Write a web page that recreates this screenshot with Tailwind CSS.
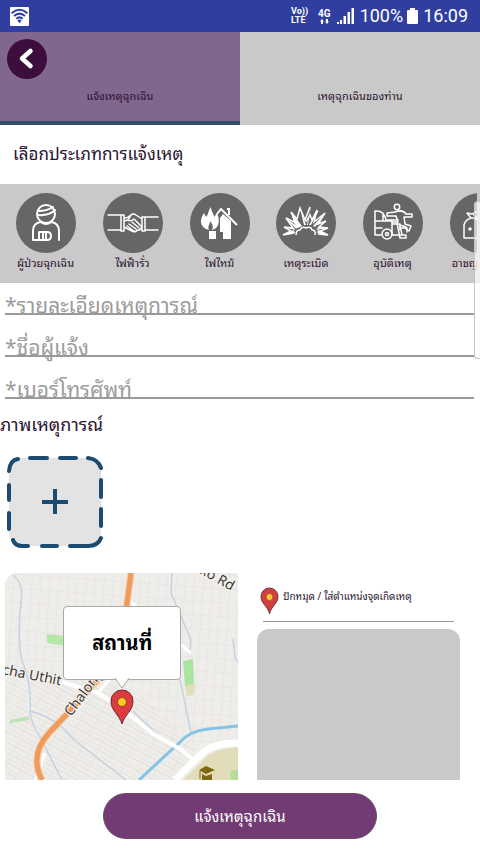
<!DOCTYPE html>
<html lang="th">
<head>
<meta charset="utf-8">
<meta name="viewport" content="width=device-width, initial-scale=1">
<title>แจ้งเหตุฉุกเฉิน</title>
<script src="https://cdn.jsdelivr.net/npm/@tailwindcss/browser@4"></script>
</head>
<body class="relative flex min-h-screen flex-col overflow-x-hidden bg-white font-['Noto_Sans_Thai_Looped','Noto_Looped_Thai','Droid_Sans_Thai','Loma','Garuda','Waree','Noto_Sans',sans-serif] text-[#2b1430]">

<header class="flex h-8 items-center justify-between bg-[#303f9f] pr-3 pl-[10px] font-[Roboto,sans-serif] text-white">
  <svg class="size-[19px]" viewBox="0 0 19 19" role="img" aria-label="Wi-Fi">
    <rect width="19" height="19" rx="1" fill="#fff"/>
    <g fill="none" stroke="#303f9f" stroke-width="2"><path d="M1.5 6.2Q9.500 -.6 17.500 6.200"/><path d="M4 9Q9.500 4.200 15 9"/><path d="M6.300 11.800Q9.500 9 12.700 11.800"/></g>
    <path d="M7.300 13.300Q9.500 11.800 11.700 13.300L9.500 16.200Z" fill="#303f9f"/>
  </svg>
  <div class="flex items-center">
    <div class="mr-[10px] text-[9px] leading-[9px] font-bold"><div>Vo))</div><div>LTE</div></div>
    <div class="mr-[6px] flex flex-col items-center text-[10px] leading-[10px] font-bold">4G
      <svg class="h-[5px] w-[9px]" viewBox="0 0 9 5" fill="#fff"><path d="M0 2.500 2 0 4 2.500H3V5H1V2.500ZM5 2.500H6V0H8V2.500H9L7 5Z"/></svg>
    </div>
    <svg class="mr-[6px] h-4 w-[17px]" viewBox="0 0 17 16" fill="#fff"><path d="M0 14h2v2H0zM3 12h2v4H3zM6.500 8h2.500v8H6.500zM10.500 4H13v12h-2.500zM14.500 0H17v16h-2.500z"/></svg>
    <span class="mr-1 text-[18px] leading-6">100%</span>
    <svg class="mr-[5px] h-4 w-[11px]" viewBox="0 0 11 16" fill="#fff"><path d="M3 0h5v2h2q1 0 1 1v12q0 1-1 1H1q-1 0-1-1V3q0-1 1-1h2z"/></svg>
    <span class="text-[18px] leading-6">16:09</span>
  </div>
</header>

<nav class="relative grid h-[93px] grid-cols-2 text-[11px] leading-4">
  <a href="#report" aria-current="page" class="flex items-end justify-center border-b-4 border-[#364c68] bg-[#80678d] pb-[18px]">แจ้งเหตุฉุกเฉิน</a>
  <a href="#mine" class="flex items-end justify-center bg-[#c9c9c9] pb-[22px]">เหตุฉุกเฉินของท่าน</a>
  <button type="button" aria-label="ย้อนกลับ" class="absolute top-[7px] left-[7px] flex size-10 items-center justify-center rounded-full bg-[#3d0d3d]">
    <svg class="size-6" viewBox="0 0 24 24" fill="none" stroke="#fff" stroke-width="4.500" stroke-linecap="round" stroke-linejoin="round"><path d="M15.500 4 7 11.500 15.500 19"/></svg>
  </button>
</nav>

<main class="flex flex-1 flex-col">
  <h1 class="flex h-[59px] items-center pb-1 pl-[13px] text-[17px] leading-6">เลือกประเภทการแจ้งเหตุ</h1>

  <section class="relative bg-[#c9c9c9]">
    <ul class="mr-[3px] flex h-[99px] overflow-hidden pt-[9px] pl-[2px] text-[11px] leading-[18px] whitespace-nowrap">
      <li class="w-[87px] shrink-0"><button type="button" class="flex w-full flex-col items-center">
        <svg class="size-[60px]" viewBox="0 0 60 60"><circle cx="30" cy="30" r="30" fill="#666"/><g fill="none" stroke="#fff" stroke-width="2" stroke-linecap="round" stroke-linejoin="round"><circle cx="30" cy="21" r="9"/><path d="M22 18Q31 18 37 14M22 22Q33 23 39 17M17 47V38Q17 30 25 29Q30 33 35 29Q43 30 43 38V47M17 47H31Q35 47 35 43Q35 39 31 39H23V47M27 39V47M30 39V47"/></g></svg>
        <span>ผู้ป่วยฉุกเฉิน</span></button></li>
      <li class="w-[87px] shrink-0"><button type="button" class="flex w-full flex-col items-center">
        <svg class="size-[60px]" viewBox="0 0 60 60"><circle cx="30" cy="30" r="30" fill="#666"/><g fill="none" stroke="#fff" stroke-width="1.500" stroke-linecap="round" stroke-linejoin="round"><path d="M5 22H18M5 37H18M55 24H42M55 37H42M18 22V38H21V22ZM42 24V38H39V24ZM21 25Q25 25 28 22Q30 20 33 22L39 26M28 22 25 27Q27 29 31 26L39 34M21 34 29 38Q33 40 34 37M26 31 33 36M29 29 36 35M24 33 31 38M34 37Q37 38 39 34M21 28 25 27"/></g></svg>
        <span>ไฟฟ้ารั่ว</span></button></li>
      <li class="w-[87px] shrink-0"><button type="button" class="flex w-full flex-col items-center">
        <svg class="size-[60px]" viewBox="0 0 60 60"><circle cx="30" cy="30" r="30" fill="#666"/><path fill="#fff" d="M19 37C10 35 9 27 14 20L16 24C19 21 18 17 21 14C21 19 24 20 24 24L27 20C31 29 28 36 22 37C24 33 22 31 20 28C20 32 17 33 19 37ZM19 38H26V46H19ZM30 25 33 21 41 28V46H33V39H30Z"/><path d="M27 21 31 16 47 32M37 16H39V22" fill="none" stroke="#fff" stroke-width="2"/></svg>
        <span>ไฟไหม้</span></button></li>
      <li class="w-[86px] shrink-0"><button type="button" class="flex w-full flex-col items-center">
        <svg class="size-[60px]" viewBox="0 0 60 60"><circle cx="30" cy="30" r="30" fill="#666"/><g fill="none" stroke="#fff" stroke-width="1.500" stroke-linejoin="miter"><path d="M18 40 7 42 15 38 8 34 17 35 10 25 20 30 15 19 21 26 24 15 29 27 34 14M36 27 41 17 38 29 49 20 42 31 50 28 43 34 52 35 44 38 52 42 42 41"/><path d="M30 29 34 22 36 27 42 18"/><path d="M20 42Q20 37 24 37Q26 33 30 35Q35 33 36 37Q40 37 39 42"/></g><path fill="#fff" d="M15 19 26 33 22 35 18 30ZM24 15 30 32H28ZM35 13 32 32H31ZM42 17 35 32H33ZM10 25 22 34 20 36ZM49 20 39 34 37 33ZM7 42 18 37 19 40ZM52 42 42 37 41 40ZM8 34 18 35 19 37ZM52 35 43 34 40 37Z"/></svg>
        <span>เหตุระเบิด</span></button></li>
      <li class="w-[87px] shrink-0"><button type="button" class="flex w-full flex-col items-center">
        <svg class="size-[60px]" viewBox="0 0 60 60"><circle cx="30" cy="30" r="30" fill="#666"/><g fill="none" stroke="#fff" stroke-width="1.500" stroke-linecap="round" stroke-linejoin="round"><path d="M18 42H12V18Q21 17 23 27H35M12 28H29V41M12 35H19M29 42H38M20 20V27M29 31H37V37"/><circle cx="24" cy="41" r="5"/><circle cx="24" cy="41" r="1.500"/><circle cx="34" cy="14" r="2.700"/><path d="M32 19 24 20V23L33 23 35 29 29 29M32 19Q40 16 43 21L49 21V24L41 24 42 31 48 33 46 38 43 36 43 34 37 32 39 42H43V45H37L34 30M39 35H44V39"/></g></svg>
        <span>อุบัติเหตุ</span></button></li>
      <li class="w-[87px] shrink-0"><button type="button" class="flex w-full flex-col items-center">
        <svg class="size-[60px]" viewBox="0 0 60 60"><circle cx="30" cy="30" r="30" fill="#666"/><g fill="none" stroke="#fff" stroke-width="1.500" stroke-linecap="round" stroke-linejoin="round"><path d="M14 45V32Q15 27 21 25L17 20 22 21 27 19M21 25Q27 24 32 32V45H14M24 22 28 26"/><circle cx="20" cy="36" r="1"/></g></svg>
        <span>อาชญากรรม</span></button></li>
    </ul>
    <div class="absolute top-[17px] right-0 h-[158px] w-[6px] rounded-l border border-r-0 border-[#c4c4c4] bg-white/70"></div>
  </section>

  <form class="flex flex-1 flex-col">
    <div class="flex flex-col pr-[6px] pl-[5px]">
      <input aria-label="รายละเอียดเหตุการณ์" type="text" placeholder="*รายละเอียดเหตุการณ์" class="h-[42px] bg-[linear-gradient(#9a9a9a,#9a9a9a)] bg-[length:100%_2px] bg-[position:0_30px] bg-no-repeat pb-[2px] text-[21px] leading-10 outline-none placeholder:text-[#9c9c9c]">
      <input aria-label="ชื่อผู้แจ้ง" type="text" placeholder="*ชื่อผู้แจ้ง" class="h-[42px] bg-[linear-gradient(#9a9a9a,#9a9a9a)] bg-[length:100%_2px] bg-[position:0_30px] bg-no-repeat pb-[2px] text-[21px] leading-10 outline-none placeholder:text-[#9c9c9c]">
      <input aria-label="เบอร์โทรศัพท์" type="tel" placeholder="*เบอร์โทรศัพท์" class="h-[42px] bg-[linear-gradient(#9a9a9a,#9a9a9a)] bg-[length:100%_2px] bg-[position:0_30px] bg-no-repeat pb-[2px] text-[21px] leading-10 outline-none placeholder:text-[#9c9c9c]">
    </div>

    <h2 class="text-[18px] leading-7">ภาพเหตุการณ์</h2>
    <button type="button" aria-label="เพิ่มภาพ" class="mt-[18px] ml-[6px] h-[94px] w-[98px]">
      <svg class="size-full" viewBox="6 455 98 94" fill="none" stroke="#1b4b70" stroke-width="4" stroke-linecap="round"><rect x="9" y="458" width="92" height="88" rx="14" fill="#e3e3e3" stroke="none"/><path d="M9 471Q10 460 18 459M30 458H47M60 458H76M88 458Q98 459 101 468M101 480V497M101 509V526M101 538Q98 546 88 546H70M57 546H42M28 546H22Q15 546 13 540M9 529V513M9 500V485"/><path d="M55 491V512M44 502H66" stroke-linecap="square"/></svg>
    </button>

    <div class="mt-[24px] flex gap-[19px] pr-5 pl-[5px]">
      <div class="relative h-[207px] flex-[233] overflow-hidden rounded-tl-xl">
        <svg class="size-full" viewBox="0 0 233 207" preserveAspectRatio="xMidYMid slice" role="img" aria-label="แผนที่">
          <defs>
            <pattern id="blocks" width="15" height="9" patternUnits="userSpaceOnUse" patternTransform="rotate(28)"><path d="M0 0H15M0 0V9M0 4.500H15" stroke="#e0ddd8" stroke-width=".8" fill="none"/></pattern>
            <pattern id="rows" width="9" height="14" patternUnits="userSpaceOnUse" patternTransform="rotate(4)"><path d="M0 0V14M0 0H9" stroke="#e0ddd8" stroke-width=".8" fill="none"/></pattern>
          </defs>
          <rect width="233" height="207" fill="#efedea"/>
          <path d="M0 0H233V170H185L130 115L60 105L0 90Z" fill="url(#rows)"/>
          <path d="M0 90 70 105 130 115 190 175V207H0Z" fill="url(#blocks)"/>
          <path d="M42 61 62 63V73L42 70Z" fill="#b5e8a4"/>
          <path d="M178 88 188 86 189 111 180 113Z" fill="#abe3a0"/><path d="M180 113 190 110 189 122 182 123Z" fill="#dfe0b5"/>
          <path d="M5 147 24 143V147L5 150Z" fill="#bfe3b8"/>
          <path d="M179 207 203 182Q213 176 233 174V207Z" fill="#e3dcb9"/><path d="M225 200Q228 196 233 197V207H226Z" fill="#b5dc99"/>
          <g fill="none" stroke="#c3d3df" stroke-width="1.500"><path d="M8 2Q19 10 16 28Q12 65 17 88Q27 110 25 140Q27 152 35 164L57 207M25 138Q52 145 68 166L121 207M167 0 166 20 186 67 185 80M175 106 186 160M228 66 230 84 233 90M128 138 157 166"/></g>
          <path d="M233 153 203 156Q184 158 174 170L134 207" fill="none" stroke="#83c4e6" stroke-width="3"/>
          <g fill="none" stroke="#fff"><path d="M57 109 93 120 117 135 125 142 150 162 175 176 190 188" stroke-width="4"/><path d="M170 207 195 182Q207 170 233 170" stroke-width="7"/><path d="M93 120 110 100M40 180 30 207M125 28 176 72 186 80" stroke-width="3"/></g>
          <path d="M126 0 120 45 104 94 64 139 44 160Q24 182 37 207" fill="none" stroke="#f8c9a2" stroke-width="7"/>
          <path d="M126 0 120 45 104 94 64 139 44 160Q24 182 37 207" fill="none" stroke="#ee9b5c" stroke-width="5"/>
          <g fill="#3b3836" stroke="#f7f4f1" stroke-width="2" paint-order="stroke" font-family="Noto Sans, sans-serif" font-size="14"><text transform="translate(-3 101) rotate(11)">cha Uthit</text><text transform="translate(66 144) rotate(-53)">Chalong</text><text transform="translate(194 0) rotate(29)">ko Rd</text></g>
          <path d="M194 197 201 193 210 197 201 201ZM197 201V207H207V201L201 203Z" fill="#7d6813"/><path d="M195 198V206" stroke="#7d6813"/>
          <path d="M117 151C114 141 106 138 106 128A11 11 0 0 1 128 128C128 138 120 141 117 151Z" fill="#dc3c3f" stroke="#70272d"/><circle cx="117" cy="129" r="4.500" fill="#ffc928" stroke="#96411f"/>
        </svg>
        <div class="absolute top-[33px] left-1/4 flex h-[74px] w-[118px] items-center justify-center rounded border border-[#aaa] bg-white pb-1 text-[20px] font-bold text-black">สถานที่
          <svg class="absolute -bottom-[10px] left-1/2 h-[11px] w-4 -translate-x-1/2" viewBox="0 0 16 11"><path d="M1 0 8 10 15 0" fill="#fff" stroke="#aaa"/></svg>
        </div>
      </div>
      <div class="flex flex-[203] flex-col">
        <div class="mx-[6px] flex h-[49px] items-start border-b border-[#8d9aa3] pt-[14px]">
          <svg class="-ml-[3px] mr-1 h-7 w-[19px] shrink-0" viewBox="0 0 19 28"><path d="M9.500 27C8 19 1 17 1 9.500A8.500 8.500 0 0 1 18 9.500C18 17 11 19 9.500 27Z" fill="#d23f42" stroke="#70383c"/><circle cx="9.500" cy="10" r="3.500" fill="#ffcb35" stroke="#b4552b"/></svg>
          <span class="text-[10px] leading-[18px] whitespace-nowrap">ปักหมุด / ใส่ตำแหน่งจุดเกิดเหตุ</span>
        </div>
        <div class="mt-[7px] flex-1 rounded-t-xl bg-[#c9c9c9]"></div>
      </div>
    </div>

    <div class="flex flex-1 items-start justify-center pt-[13px] pb-[14px]">
      <button type="submit" class="h-[46px] w-[57%] rounded-full border border-[#6a4a6c] bg-[#723b73] pb-[2px] text-[15px] text-white">แจ้งเหตุฉุกเฉิน</button>
    </div>
  </form>
</main>
</body>
</html>
